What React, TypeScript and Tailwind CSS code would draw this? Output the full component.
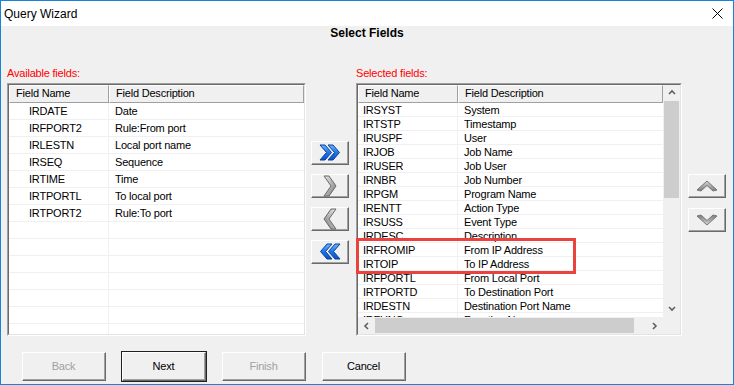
import React from 'react';

const leftRows: [string, string][] = [
  ['IRDATE', 'Date'],
  ['IRFPORT2', 'Rule:From port'],
  ['IRLESTN', 'Local port name'],
  ['IRSEQ', 'Sequence'],
  ['IRTIME', 'Time'],
  ['IRTPORTL', 'To local port'],
  ['IRTPORT2', 'Rule:To port'],
  ['', ''],
  ['', ''],
  ['', ''],
  ['', ''],
  ['', ''],
  ['', ''],
  ['', ''],
];

const rightRows: [string, string][] = [
  ['IRSYST', 'System'],
  ['IRTSTP', 'Timestamp'],
  ['IRUSPF', 'User'],
  ['IRJOB', 'Job Name'],
  ['IRUSER', 'Job User'],
  ['IRNBR', 'Job Number'],
  ['IRPGM', 'Program Name'],
  ['IRENTT', 'Action Type'],
  ['IRSUSS', 'Event Type'],
  ['IRDESC', 'Description'],
  ['IRFROMIP', 'From IP Address'],
  ['IRTOIP', 'To IP Address'],
  ['IRFPORTL', 'From Local Port'],
  ['IRTPORTD', 'To Destination Port'],
  ['IRDESTN', 'Destination Port Name'],
  ['IRFUNC', 'Function Name'],
];

const font = { fontFamily: '"Liberation Sans", Arial, sans-serif' };

function ListHeader() {
  return (
    <div className="flex h-[18px] shrink-0 bg-[#f0f0f0] text-black">
      <div className="w-[100px] border-t border-l border-r border-b border-t-white border-l-white border-r-[#a0a0a0] border-b-[#a0a0a0] pl-[6px] leading-[15px]">
        Field Name
      </div>
      <div className="flex-1 border-t border-l border-r border-b border-t-white border-l-white border-r-[#a0a0a0] border-b-[#a0a0a0] pl-[6px] leading-[15px]">
        Field Description
      </div>
    </div>
  );
}

// sunken 3d frame used by both lists
function Sunken({ className, children }: { className: string; children: React.ReactNode }) {
  return (
    <div className={`border border-t-[#a0a0a0] border-l-[#a0a0a0] border-r-white border-b-white ${className}`}>
      <div className="h-full w-full border border-t-[#696969] border-l-[#696969] border-r-[#e3e3e3] border-b-[#e3e3e3] bg-white overflow-hidden">
        {children}
      </div>
    </div>
  );
}

function DoubleChevron({ left }: { left?: boolean }) {
  return (
    <svg width="22" height="17" viewBox="0 0 22 17" style={{ transform: left ? 'scaleX(-1)' : undefined }}>
      <defs>
        <linearGradient id={left ? 'bl' : 'br'} x1="0" y1="0" x2="0" y2="1">
          <stop offset="0" stopColor="#6bb6ff" />
          <stop offset="0.5" stopColor="#1c78ea" />
          <stop offset="1" stopColor="#0a4fc4" />
        </linearGradient>
      </defs>
      <polygon points="1,1 6,1 12.5,8.5 6,16 1,16 7.5,8.5" fill={`url(#${left ? 'bl' : 'br'})`} stroke="#0c3f96" strokeWidth="1" strokeLinejoin="round" />
      <polygon points="9,1 14,1 20.5,8.5 14,16 9,16 15.5,8.5" fill={`url(#${left ? 'bl' : 'br'})`} stroke="#0c3f96" strokeWidth="1" strokeLinejoin="round" />
    </svg>
  );
}

function SingleChevron({ left }: { left?: boolean }) {
  return (
    <svg width="14" height="22" viewBox="0 0 14 22" style={{ transform: left ? 'scaleX(-1)' : undefined }}>
      <defs>
        <linearGradient id={left ? 'gl' : 'gr'} x1="0" y1="0" x2="1" y2="1">
          <stop offset="0" stopColor="#e8e8e8" />
          <stop offset="0.6" stopColor="#a8a8a8" />
          <stop offset="1" stopColor="#6e6e6e" />
        </linearGradient>
      </defs>
      <polygon points="1,1 6,1 13,11 6,21 1,21 8,11" fill={`url(#${left ? 'gl' : 'gr'})`} stroke="#6a6a6a" strokeWidth="1" strokeLinejoin="round" />
    </svg>
  );
}

function VChevron({ down }: { down?: boolean }) {
  return (
    <svg width="22" height="12" viewBox="0 0 22 12" style={{ transform: down ? 'scaleY(-1)' : undefined }}>
      <defs>
        <linearGradient id={down ? 'vd' : 'vu'} x1="0" y1="0" x2="0" y2="1">
          <stop offset="0" stopColor="#d6d6d6" />
          <stop offset="1" stopColor="#7a7a7a" />
        </linearGradient>
      </defs>
      <polygon points="1,10 11,1 21,10 17,11 11,5.5 5,11" fill={`url(#${down ? 'vd' : 'vu'})`} stroke="#777777" strokeWidth="1" strokeLinejoin="round" />
    </svg>
  );
}

function SmallArrow({ dir }: { dir: 'up' | 'down' | 'left' | 'right' }) {
  const pts = {
    up: '1,5 4,2 7,5',
    down: '1,2 4,5 7,2',
    left: '5,1 2,4 5,7',
    right: '2,1 5,4 2,7',
  }[dir];
  return (
    <svg width="8" height="8" viewBox="0 0 8 8">
      <polyline points={pts} fill="none" stroke="#606060" strokeWidth="1.6" />
    </svg>
  );
}

function ToolButton({ children }: { children: React.ReactNode }) {
  return (
    <div className="h-[24px] w-[38px] border border-t-white border-l-white border-r-[#696969] border-b-[#696969] bg-[#f0f0f0]">
      <div className="flex h-full w-full items-center justify-center border-r border-b border-r-[#a0a0a0] border-b-[#a0a0a0]">
        {children}
      </div>
    </div>
  );
}

function WizButton({ label, disabled, def }: { label: string; disabled?: boolean; def?: boolean }) {
  return (
    <div className={`h-[31px] w-[86px] border ${def ? 'border-[#202020]' : 'border-transparent'}`}>
      <div className="h-full w-full border border-t-white border-l-white border-r-[#696969] border-b-[#696969] bg-[#f0f0f0]">
        <div
          className={`flex h-full w-full items-center justify-center border-r border-b border-r-[#a0a0a0] border-b-[#a0a0a0] text-[11px] ${disabled ? 'text-[#a0a0a0]' : 'text-black'}`}
        >
          {label}
        </div>
      </div>
    </div>
  );
}

export default function App() {
  return (
    <div className="flex h-[385px] w-[734px] flex-col border border-[#1883d7] bg-[#f0f0f0] text-[11px] tracking-[-0.2px]" style={font}>
      {/* title bar */}
      <div className="flex h-[25px] shrink-0 items-center justify-between bg-white pl-[3px] pr-[10px]">
        <span className="text-[12px] tracking-normal text-black">Query Wizard</span>
        <svg width="11" height="11" viewBox="0 0 11 11">
          <path d="M0.5 0.5 L10.5 10.5 M10.5 0.5 L0.5 10.5" stroke="#000" strokeWidth="1" />
        </svg>
      </div>

      <div className="h-[14px] text-center text-[12px] font-bold leading-[14px] tracking-normal text-black">Select Fields</div>

      <div className="mt-[27px] flex items-start pl-[6px]">
        {/* available */}
        <div className="flex w-[299px] flex-col">
          <div className="h-[16px] leading-[13px] text-[#ff0000]">Available fields:</div>
          <Sunken className="h-[253px]">
            <ListHeader />
            {leftRows.map(([n, d], i) => (
              <div key={i} className="flex h-[17px] border-b border-[#f0f0f0] leading-[16px] text-black">
                <div className="w-[100px] border-r border-[#f0f0f0] pl-[20px]">{n}</div>
                <div className="flex-1 pl-[6px]">{d}</div>
              </div>
            ))}
          </Sunken>
        </div>

        {/* move buttons */}
        <div className="ml-[5px] mt-[74px] flex flex-col gap-[9px]">
          <ToolButton>
            <DoubleChevron />
          </ToolButton>
          <ToolButton>
            <SingleChevron />
          </ToolButton>
          <ToolButton>
            <SingleChevron left />
          </ToolButton>
          <ToolButton>
            <DoubleChevron left />
          </ToolButton>
        </div>

        {/* selected */}
        <div className="relative ml-[7px] flex w-[326px] flex-col">
          <div className="h-[16px] leading-[13px] text-[#ff0000]">Selected fields:</div>
          <Sunken className="h-[253px]">
            <div className="flex h-full flex-col">
              <div className="flex h-[232px]">
                <div className="flex w-[305px] flex-col overflow-hidden">
                  <ListHeader />
                  {rightRows.map(([n, d], i) => (
                    <div key={i} className="flex h-[14px] shrink-0 border-b border-[#f0f0f0] leading-[14px] text-black">
                      <div className="w-[100px] border-r border-[#f0f0f0] pl-[5px]">{n}</div>
                      <div className="flex-1 pl-[6px]">{d}</div>
                    </div>
                  ))}
                </div>
                {/* vertical scrollbar */}
                <div className="flex w-[17px] flex-col bg-[#f0f0f0]">
                  <div className="flex h-[16px] items-center justify-center">
                    <SmallArrow dir="up" />
                  </div>
                  <div className="mx-[1px] h-[97px] bg-[#cdcdcd]" />
                  <div className="flex-1" />
                  <div className="flex h-[17px] items-center justify-center">
                    <SmallArrow dir="down" />
                  </div>
                </div>
              </div>
              {/* horizontal scrollbar */}
              <div className="flex h-[17px]">
                <div className="flex w-[305px] items-center bg-[#f0f0f0]">
                  <div className="flex w-[17px] justify-center">
                    <SmallArrow dir="left" />
                  </div>
                  <div className="h-[15px] w-[259px] bg-[#cdcdcd]" />
                  <div className="flex-1" />
                  <div className="flex w-[17px] justify-center">
                    <SmallArrow dir="right" />
                  </div>
                </div>
                <div className="w-[17px] bg-[#f0f0f0]" />
              </div>
            </div>
          </Sunken>
          {/* highlight box */}
          <div className="absolute left-0 top-[171px] h-[36px] w-[220px] border-[3px] border-[#e8433f]" />
        </div>

        {/* order buttons */}
        <div className="ml-[6px] mt-[107px] flex flex-col gap-[10px]">
          <ToolButton>
            <VChevron />
          </ToolButton>
          <ToolButton>
            <VChevron down />
          </ToolButton>
        </div>
      </div>

      <div className="mt-[15px] flex gap-[14px] pl-[20px]">
        <WizButton label="Back" disabled />
        <WizButton label="Next" def />
        <WizButton label="Finish" disabled />
        <WizButton label="Cancel" />
      </div>
    </div>
  );
}
